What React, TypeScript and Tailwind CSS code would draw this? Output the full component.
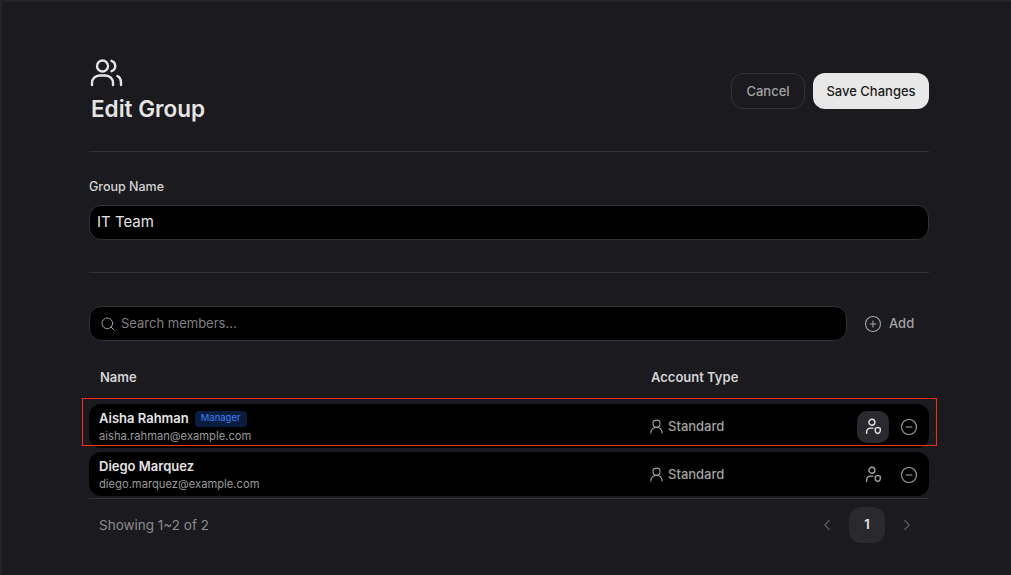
import { ChevronLeft, ChevronRight, CirclePlus, CircleMinus, Search, UserRound } from "lucide-react";

const font = "font-['Inter','Liberation_Sans',sans-serif]";

function GroupIcon() {
  return (
    <svg width="34" height="30" viewBox="0 0 34 30" fill="none" stroke="#e5e5e5" strokeWidth="2.400" strokeLinecap="round" className="ml-[1px]">
      <circle cx="12.500" cy="8" r="5.500" />
      <path d="M21.500 2.800a5.500 5.500 0 0 1 0 10.400" />
      <path d="M2 27v-2a7.500 7.500 0 0 1 7.500-7.500h6a7.500 7.500 0 0 1 7.500 7.500v2" />
      <path d="M27.500 18a7 7 0 0 1 3.500 6v3" />
    </svg>
  );
}

function RoleIcon({ color }: { color: string }) {
  return (
    <svg width="17" height="17" viewBox="0 0 16 16" fill="none" stroke={color} strokeWidth="1.300" strokeLinecap="round" strokeLinejoin="round">
      <circle cx="6.500" cy="4" r="2.800" />
      <path d="M1.500 14.500v-1.500a4 4 0 0 1 4-3.500h2" />
      <path d="M12 8.800l2.400.9v2.200c0 1.400-1 2.200-2.400 2.800-1.400-.6-2.400-1.400-2.400-2.800V9.700z" />
    </svg>
  );
}

type Member = { name: string; email: string; manager?: boolean };

const members: Member[] = [
  { name: "Aisha Rahman", email: "aisha.rahman@example.com", manager: true },
  { name: "Diego Marquez", email: "diego.marquez@example.com" },
];

function MemberRow({ member }: { member: Member }) {
  return (
    <div className="relative flex h-11 items-center rounded-xl bg-black pl-[10px] pr-[4px]">
      <div className="w-[549px] shrink-0 pt-[2px]">
        <div className="flex h-[18px] items-center gap-[6px]">
          <span className="text-[13px] font-semibold text-[#e5e5e5]">{member.name}</span>
          {member.manager && (
            <span className="flex h-4 items-center rounded bg-[#0b1d3f] px-[6px] text-[9.500px] text-[#3b82f6]">Manager</span>
          )}
        </div>
        <div className="text-[11.200px] leading-[17px] text-[#9a9a9a]">{member.email}</div>
      </div>
      <div className="flex items-center gap-[3px] pt-[1px] text-[13px] font-medium text-[#a3a3a3]">
        <UserRound size={17} strokeWidth={1.500} />
        <span>Standard</span>
      </div>
      <div className="ml-auto flex items-center gap-[4px] pt-[1px]">
        <button
          className={`flex h-8 w-8 items-center justify-center rounded-[10px] ${member.manager ? "bg-[#2a2a2e]" : ""}`}
        >
          <RoleIcon color={member.manager ? "#e5e5e5" : "#a3a3a3"} />
        </button>
        <button className="flex h-8 w-8 items-center justify-center text-[#a3a3a3]">
          <CircleMinus size={18} strokeWidth={1.500} />
        </button>
      </div>
      {member.manager && (
        <div className="pointer-events-none absolute -left-[7px] -right-[8px] -top-[6px] h-[48px] border border-[#ff2a10]" />
      )}
    </div>
  );
}

export default function App() {
  return (
    <div className={`h-[575px] w-[1011px] overflow-hidden border-l-2 border-t-2 border-[#232328] bg-[#1a1a1f] pl-[87px] pr-[82px] ${font}`}>
      <div className="flex h-[150px] items-start justify-between border-b border-[#333337] pt-[56px]">
        <div>
          <GroupIcon />
          <h1 className="ml-[2px] mt-[4px] text-[22.500px] font-semibold leading-[34px] text-[#e5e5e5]">Edit Group</h1>
        </div>
        <div className="mt-[15px] flex gap-2">
          <button className="h-9 w-[74px] rounded-xl border border-[#333337] pt-[1px] text-[13px] font-medium text-[#a3a3a3]">Cancel</button>
          <button className="h-9 w-[116px] rounded-xl bg-[#e8e8e8] pt-[1px] text-[13px] font-medium text-[#1b1b20]">Save Changes</button>
        </div>
      </div>

      <div className="flex h-[121px] flex-col border-b border-[#333337] pt-[26px]">
        <label className="text-[12.500px] font-medium leading-[18px] text-[#d4d4d4]">Group Name</label>
        <div className="mt-[9px] flex h-[35px] items-center rounded-xl border border-[#333337] bg-black px-[7px] text-[15px] text-[#e5e5e5]">
          IT Team
        </div>
      </div>

      <div className="mt-[33px] flex items-center">
        <div className="flex h-[35px] w-[758px] items-center gap-[5px] rounded-xl border border-[#333337] bg-black px-[10px] text-[13px] text-[#808080]">
          <Search size={16} strokeWidth={1.500} className="text-[#a3a3a3]" />
          <span>Search members...</span>
        </div>
        <button className="ml-[17px] flex items-center gap-[7px] text-[13px] font-medium text-[#a3a3a3]">
          <CirclePlus size={18} strokeWidth={1.500} />
          Add
        </button>
      </div>

      <div className="mt-[27px] flex h-[20px] items-center pl-[11px] text-[13px] font-semibold text-[#d4d4d4]">
        <span className="w-[551px]">Name</span>
        <span>Account Type</span>
      </div>

      <div className="mt-[16px] flex flex-col gap-1 border-b border-[#333337] pb-[2px]">
        {members.map((m) => (
          <MemberRow key={m.email} member={m} />
        ))}
      </div>

      <div className="mt-2 flex h-9 items-center justify-between pl-[10px]">
        <span className="text-[13.500px] text-[#8c8c8c]">Showing 1~2 of 2</span>
        <div className="flex items-center">
          <ChevronLeft size={18} strokeWidth={1.500} className="mr-[13px] text-[#5f5f64]" />
          <span className="flex h-9 w-9 items-center justify-center rounded-xl bg-[#2a2a2e] text-[13px] font-semibold text-[#e5e5e5]">1</span>
          <ChevronRight size={18} strokeWidth={1.500} className="ml-[13px] mr-[13px] text-[#5f5f64]" />
        </div>
      </div>
    </div>
  );
}
